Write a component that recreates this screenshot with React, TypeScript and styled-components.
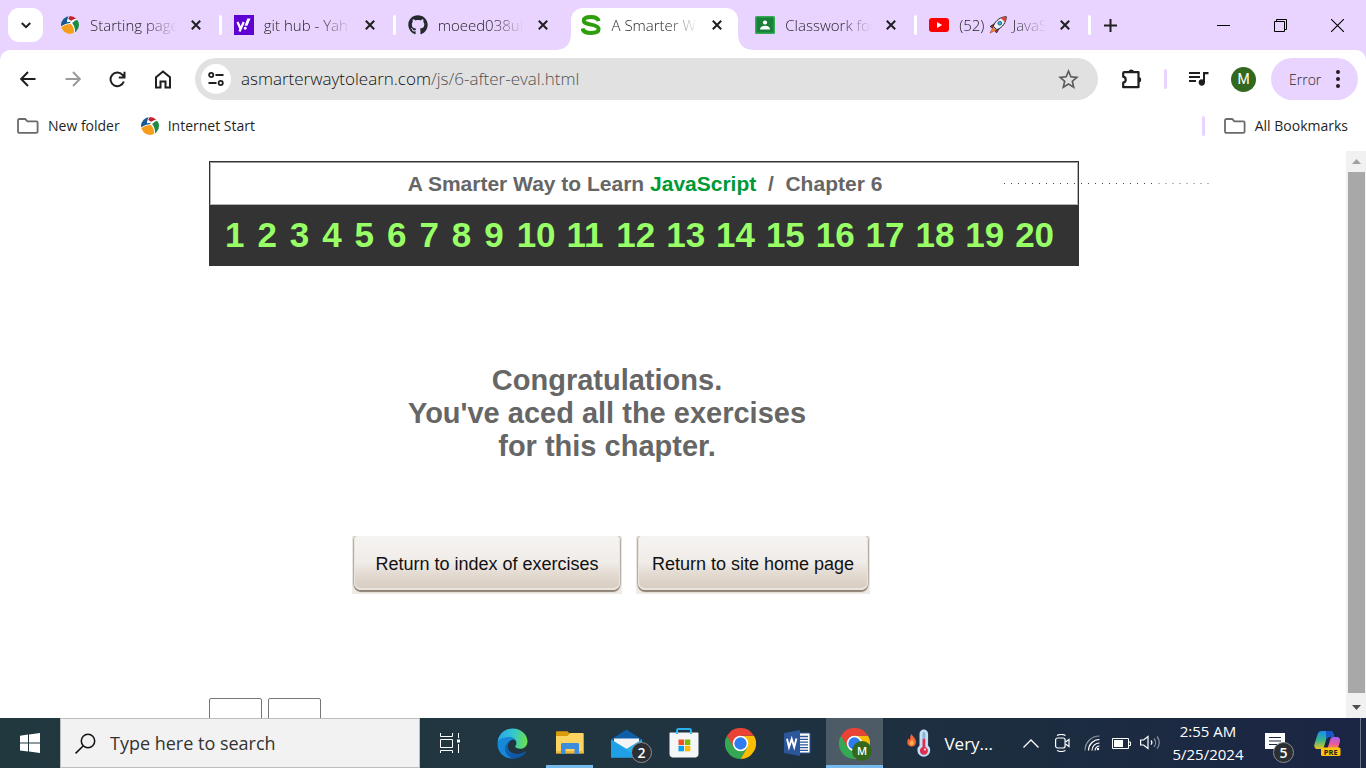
import React from "react";
import styled, { createGlobalStyle } from "styled-components";
import { FaGithub } from "react-icons/fa";
import { MdStarBorder } from "react-icons/md";

const ui = `"Open Sans", "Noto Sans", sans-serif`;
const helv = `"Liberation Sans", Arial, sans-serif`;
const lilac = "#e9d4ff";

const GlobalStyle = createGlobalStyle`
  *, *::before, *::after { box-sizing: border-box; }
  body { margin: 0; background: #fff; font-family: ${ui}; font-weight: 350; color: #1f1f1f; }
  button { font: inherit; color: inherit; border: 0; background: none; padding: 0; }
  a { color: inherit; text-decoration: none; }
  svg { display: block; flex: none; }
`;

const Screen = styled.div`
  display: flex;
  flex-direction: column;
  height: 100vh;
  overflow: hidden;
`;

/* ---------- tab strip ---------- */
const TabStrip = styled.header`
  display: flex;
  height: 50px;
  padding-left: 8px;
  background: ${lilac};
`;
const TabSearch = styled.button`
  display: grid;
  place-items: center;
  width: 35px;
  height: 34px;
  margin: 8px 4px 0 0;
  border-radius: 11px;
  background: #fff;
`;
const Tabs = styled.nav`
  display: flex;
  flex: 0 1 1043px;
  min-width: 0;
`;
const TabItem = styled.div<{ $active?: boolean; $divided?: boolean }>`
  position: relative;
  display: flex;
  flex: 1 1 0;
  min-width: 0;
  align-items: center;
  margin-top: 8px;
  padding: 0 20px 8px 13px;
  &::before {
    content: "";
    display: ${(p) => (p.$active ? "block" : "none")};
    position: absolute;
    inset: 0 4px 0 3px;
    border-radius: 12px 12px 0 0;
    background: #fff;
  }
  &::after {
    content: "";
    display: ${(p) => (p.$active || p.$divided ? "block" : "none")};
    position: absolute;
    ${(p) =>
      p.$active
        ? `inset: auto -9px 0 -10px; height: 13px;
           background: radial-gradient(circle at 0 0, transparent 12px, #fff 13px) left / 13px 13px no-repeat,
                       radial-gradient(circle at 100% 0, transparent 12px, #fff 13px) right / 13px 13px no-repeat;`
        : `top: 7px; right: -1px; width: 3px; height: 20px; border-radius: 2px; background: #fff;`}
  }
  > * { z-index: 1; }
`;
const IconSlot = styled.span`
  display: grid;
  flex: none;
  place-items: center;
  width: 20px;
  height: 20px;
`;
const TabTitle = styled.a`
  display: flex;
  flex: 1;
  min-width: 0;
  align-items: center;
  gap: 5px;
  margin: 0 14px 0 10px;
  overflow: hidden;
  white-space: nowrap;
  font-size: 15px;
  line-height: 24px;
  mask-image: linear-gradient(to right, #000 64%, transparent 100%);
`;
const CloseButton = styled.button`
  display: grid;
  place-items: center;
`;
const NewTab = styled.button`
  width: 41px;
  display: grid;
  place-items: center;
`;
const WindowControls = styled.div`
  display: flex;
  margin-left: auto;
  button { width: 57px; display: grid; place-items: center; }
`;

/* ---------- toolbar ---------- */
const ToolbarBack = styled.div`
  background: ${lilac};
`;
const Toolbar = styled.div`
  display: flex;
  align-items: center;
  height: 58px;
  padding: 0 8px 0 5px;
  border-radius: 10px 10px 0 0;
  background: #fff;
`;
const ToolButton = styled.button<{ $faded?: boolean; $w?: number }>`
  display: grid;
  place-items: center;
  width: ${(p) => p.$w ?? 45}px;
  height: 40px;
  color: ${(p) => (p.$faded ? "#9b9b9b" : "#1f1f1f")};
`;
const Omnibox = styled.div`
  display: flex;
  flex: 1;
  align-items: center;
  height: 42px;
  margin-left: 10px;
  padding: 0 17px 0 6px;
  border-radius: 21px;
  background: #e1e1e1;
  color: #5c5c5c;
`;
const SiteInfo = styled.button`
  display: grid;
  place-items: center;
  width: 30px;
  height: 30px;
  margin-right: 10px;
  border-radius: 50%;
  background: #fff;
  color: #1f1f1f;
`;
const Address = styled.div`
  flex: 1;
  color: #505050;
  font-size: 17px;
  line-height: 24px;
  white-space: nowrap;
  b { font-weight: 350; color: #111; }
`;
const Divider = styled.span`
  width: 3px;
  height: 20px;
  border-radius: 2px;
  background: ${lilac};
`;
const Avatar = styled.button`
  width: 25px;
  height: 25px;
  margin-right: 15px;
  border-radius: 50%;
  background: #33691e;
  color: #fff;
  font: 400 14px/25px Roboto, sans-serif;
`;
const ErrorPill = styled.button`
  display: flex;
  align-items: center;
  justify-content: space-between;
  width: 87px;
  height: 42px;
  padding: 0 18px;
  border-radius: 21px;
  background: ${lilac};
  font-size: 14px;
`;

const BookmarkBar = styled.nav`
  display: flex;
  align-items: center;
  height: 43px;
  padding: 0 18px 8px 17px;
  font-size: 14px;
  font-weight: 400;
  line-height: 18px;
`;
const Bookmark = styled.a`
  display: flex;
  align-items: center;
  gap: 9px;
  margin-right: 21px;
  &:last-child { margin: 0 0 0 19px; }
`;
const Spacer = styled.span`
  flex: 1;
`;

/* ---------- page ---------- */
const Viewport = styled.div`
  display: flex;
  flex: 1;
  min-height: 0;
`;
const Page = styled.main`
  flex: 1;
  min-width: 0;
  overflow: hidden;
  padding-top: 10px;
  font-family: ${helv};
  font-weight: 400;
`;
const Column = styled.div`
  max-width: 928px;
  margin: 0 auto;
`;
const Banner = styled.header`
  position: relative;
  max-width: 870px;
  border: 1px solid #333;
  background: #333;
`;
const BannerTitle = styled.div`
  height: 43px;
  padding-left: 2px;
  border: 1px solid #b4b4b4;
  border-top-color: #999;
  background: #fff;
  color: #666;
  font-size: 21px;
  font-weight: 700;
  line-height: 42px;
  text-align: center;
  white-space: pre;
  em { font-style: normal; color: #093; }
`;
const Chapters = styled.nav`
  display: grid;
  grid-template-columns: repeat(9, 13fr) repeat(11, 20fr);
  height: 60px;
  padding: 0 13px 0 15px;
  color: #9f6;
  font-size: 35px;
  font-weight: 700;
  line-height: 60px;
`;
const DotTrail = styled.svg`
  position: absolute;
  top: 20px;
  right: -134px;
`;
const Result = styled.section`
  max-width: 796px;
`;
const Message = styled.h1`
  margin: 98px 0 73px;
  color: #666;
  font-size: 29px;
  line-height: 33px;
  text-align: center;
`;
const Actions = styled.div`
  display: flex;
  justify-content: center;
  gap: 14px;
  padding-left: 8px;
`;
const Plate = styled.span`
  display: block;
  padding: 0 2px 4px;
  overflow: hidden;
  background: #efebe6;
`;
const SoftButton = styled.button<{ $w: number }>`
  display: block;
  width: ${(p) => p.$w}px;
  height: 54px;
  padding-top: 4px;
  border: solid #e9e4df;
  border-width: 0 1px 2px;
  border-radius: 4px 4px 7px 7px;
  background: linear-gradient(#f6f4f2, #f0ece8 50%, #e2d9cf 75%, #d8cdc1);
  box-shadow: 0 2px 1px #8d8174, 0 0 1px 1px #b7aea4;
  color: #111;
  font-size: 18px;
`;
const Scores = styled.div`
  display: flex;
  gap: 6px;
  margin-top: 104px;
`;
const ScoreBox = styled.input`
  width: 53px;
  height: 30px;
  border: 1px solid #767676;
  border-radius: 2px;
`;

const Scrollbar = styled.div`
  display: flex;
  flex-direction: column;
  width: 20px;
  background: #f1f1f1;
`;
const ScrollButton = styled.button`
  display: grid;
  place-items: center;
  height: 21px;
`;
const Thumb = styled.div`
  flex: 1;
  margin: 0 1px 4px 2px;
  background: #a8a8a8;
`;

/* ---------- taskbar ---------- */
const Taskbar = styled.footer`
  display: flex;
  align-items: stretch;
  height: 50px;
  background: linear-gradient(to right, #21383f, #203540 45%, #1c2d40 75%, #1b2544);
  color: #fff;
  font-weight: 400;
`;
const TaskButton = styled.button<{ $w?: number; $open?: boolean; $active?: boolean }>`
  position: relative;
  display: grid;
  place-items: center;
  width: ${(p) => p.$w ?? 57}px;
  background: ${(p) => (p.$active ? "#4c5b66" : "transparent")};
  &::after {
    content: "";
    display: ${(p) => (p.$open || p.$active ? "block" : "none")};
    position: absolute;
    inset: auto ${(p) => (p.$active ? 0 : 5)}px 0;
    height: 3px;
    background: #76b9ed;
  }
`;
const TaskSearch = styled.label`
  display: flex;
  align-items: center;
  gap: 14px;
  width: 360px;
  padding: 0 14px;
  border: 1px solid #bdbdbd;
  background: #f2f2f2;
  color: #1f1f1f;
`;
const SearchInput = styled.input`
  flex: 1;
  min-width: 0;
  padding: 0;
  border: 0;
  background: none;
  font: 18px/26px ${ui};
  &::placeholder { color: #333; opacity: 1; }
`;
const Apps = styled.div`
  display: flex;
  margin-left: 4px;
`;
const Badge = styled.span<{ $right?: number }>`
  position: absolute;
  right: ${(p) => p.$right ?? 3}px;
  bottom: 5px;
  width: 21px;
  height: 21px;
  border: 1px solid #8d8d8d;
  border-radius: 50%;
  background: #2b2f33;
  color: #fff;
  font-size: 14px;
  font-weight: 600;
  line-height: 19px;
  text-align: center;
`;
const ProfileBadge = styled(Badge)`
  bottom: 7px;
  width: 20px;
  height: 20px;
  border: 0;
  background: #33691e;
  font-size: 11px;
`;
const Tray = styled.div`
  display: flex;
  margin-left: auto;
`;
const Weather = styled.button`
  display: flex;
  align-items: center;
  gap: 13px;
  margin-right: 20px;
  font-size: 17px;
`;
const Clock = styled.button`
  width: 86px;
  margin-right: 4px;
  font-size: 15px;
  line-height: 23px;
  time { display: block; }
`;
const ShowDesktop = styled.button`
  width: 6px;
  border-left: 1px solid #6b7585;
`;

/* ---------- drawings ---------- */
const Cross = () => (
  <svg width="10" height="10" viewBox="0 0 10 10" stroke="#1f1f1f" strokeWidth="2">
    <path d="M.8.8l8.4 8.4M9.2.8L.8 9.2" />
  </svg>
);
const Ball = () => (
  <svg width="18" height="18" viewBox="0 0 18 18">
    <defs><clipPath id="ballClip"><circle cx="9" cy="9" r="9" /></clipPath></defs>
    <g clipPath="url(#ballClip)">
      <path d="M0 0h18v18H0z" fill="#fff" />
      <path d="M0 0h7.800C6.500 2.200 6 4.200 6 6.200L10 5.800 8.500 7.200C5.500 7.400 2.500 8.500 0 10.500z" fill="#155a94" />
      <path d="M8.800 0H16v2.600c-2.200.3-4 1-5.800 2.200L7.200 3C7.500 2 8 1 8.800 0z" fill="#c2212e" />
      <path d="M18 3.200V18h-4.300c1-4-.1-7.800-2.500-11C13 5 15.300 3.800 18 3.200z" fill="#1f8a45" />
      <path d="M0 11.500C2.800 8.800 6.300 7.700 10 7.900c2.700 3 3.600 6.300 2.800 10.100H0z" fill="#f79d1e" />
    </g>
  </svg>
);
const Yahoo = () => (
  <svg width="20" height="20" viewBox="0 0 20 20">
    <path d="M0 0h20v20H0z" fill="#5f01d1" />
    <path d="M3.500 7l3 6.800M9.700 7l-4.200 9.500" stroke="#fff" strokeWidth="2.300" fill="none" />
    <path d="M13.300 3.500h3.200l-3 7.300h-3zM11.200 11.800a1.500 1.500 0 1 0 .1 0z" fill="#fff" />
  </svg>
);
const SmarterS = () => (
  <svg width="20" height="20" viewBox="0 0 20 20">
    <path d="M17.600 6.200C17 3.300 14 2.100 10 2.100c-4.200 0-7.200 1.200-7.200 3.500 0 2.600 3 3.200 7.200 4 4.400.8 7.600 1.700 7.600 4.400 0 2.500-3.200 3.900-7.600 3.900-5 0-8-1.400-8.500-4.500" fill="none" stroke="#2f9e0c" strokeWidth="4" />
  </svg>
);
const Classroom = () => (
  <svg width="20" height="18" viewBox="0 0 20 18">
    <rect width="20" height="18" rx="1.500" fill="#34a853" />
    <path d="M1.500 1.500h17v15h-17z" fill="#188038" />
    <circle cx="10" cy="6.500" r="2.100" fill="#fff" />
    <path d="M5 13.500c0-2.600 2.400-3.800 5-3.800s5 1.200 5 3.800z" fill="#fff" />
  </svg>
);
const YouTube = () => (
  <svg width="20" height="14" viewBox="0 0 20 14">
    <rect width="20" height="14" rx="3" fill="#f00" />
    <path d="M8 4l5.200 3L8 10z" fill="#fff" />
  </svg>
);
const Rocket = () => (
  <svg width="18" height="18" viewBox="0 0 18 18">
    <path d="M5 8L1 10.500 3.500 12zM10 13l-2.500 4L6 14.500z" fill="#c33" stroke="#222" strokeWidth=".8" />
    <path d="M4 11.500l2.800 2.800L1 17z" fill="#f78d1e" stroke="#a33" strokeWidth=".6" />
    <path d="M17.300.7C12 .8 6.500 4 4.300 10.200l3.500 3.500C14 11.500 17.200 6 17.300.7z" fill="#eaf3f8" stroke="#222" />
    <path d="M17.300.7c-2 0-4 .5-5.600 1.300l4.300 4.300c.8-1.700 1.300-3.600 1.300-5.600z" fill="#d6453d" />
    <circle cx="10.800" cy="7.200" r="1.900" fill="#35b5e9" stroke="#234" strokeWidth=".7" />
  </svg>
);
const Folder = () => (
  <svg width="22" height="16" viewBox="0 0 22 16" fill="none" stroke="#6a6a6a" strokeWidth="1.800">
    <path d="M2.500 1h5.700l2.300 2.300h8.700c.8 0 1.400.5 1.400 1.200v9c0 .8-.6 1.400-1.400 1.400H2.500c-.8 0-1.500-.6-1.500-1.400V2.400C1 1.600 1.700 1 2.500 1z" />
  </svg>
);
const Playlist = () => (
  <svg width="20" height="17" viewBox="0 0 20 17">
    <path d="M0 2h11M0 6h11M0 10h7" stroke="currentColor" strokeWidth="2" />
    <path d="M14 1h5.500v2.300H16v8.200a3.200 3.200 0 1 1-2-3z" fill="currentColor" />
  </svg>
);
const Chrome = () => (
  <svg width="31" height="31" viewBox="0 0 48 48">
    <path d="M24 24L3.200 12A24 24 0 0 0 24 48l10.400-18z" fill="#34a853" />
    <path d="M24 12h20.800A24 24 0 0 1 24 48l10.400-18z" fill="#fbbc04" />
    <path d="M24 12h20.800A24 24 0 0 0 3.200 12l10.400 18z" fill="#ea4335" />
    <circle cx="24" cy="24" r="12" fill="#fff" />
    <circle cx="24" cy="24" r="9.500" fill="#2f7cf0" />
  </svg>
);
const Edge = () => (
  <svg width="31" height="31" viewBox="0 0 31 31">
    <defs>
      <linearGradient id="eTop" x1="0" y1=".4" x2="1" y2=".5">
        <stop offset="0" stopColor="#27a5ea" /><stop offset=".5" stopColor="#33c6cf" /><stop offset="1" stopColor="#6be04d" />
      </linearGradient>
      <linearGradient id="eLow" x1="0" y1="0" x2="1" y2="1">
        <stop offset="0" stopColor="#1468b8" /><stop offset="1" stopColor="#0d4f9f" />
      </linearGradient>
    </defs>
    <path d="M.6 14C1.400 6 7.600.5 15.500.5 24 .5 30.500 6.500 30.500 13.500c0 4.500-3.300 7.300-7.300 7.300-3 0-5-1-5-2.200 0-.8 1.200-1.400 1.200-3.600 0-3-2.900-5.600-7-5.600C6.500 9.400 2 12.500.6 14z" fill="url(#eTop)" />
    <path d="M.6 14.500C2 11.300 6.500 9 12 9c2.800 0 5 1 6.300 2.500-4.300-.5-8.300 2.500-8.300 7.500 0 6 5 9.800 10.500 10.300C11 33.500-.5 26.500.6 14.500z" fill="#1788d8" />
    <path d="M12.500 13.500c-3 4-2 9 2.500 11.300 4 2 9.300 1.300 13.200-1.300.7-.4 1.200.2.800.8C25.500 29 20 31.500 15.500 30.300 9.500 28.500 7 23.500 8.300 18.600c.7-2.700 2.200-4.400 4.200-5.100z" fill="url(#eLow)" />
  </svg>
);
const Explorer = () => (
  <svg width="28" height="24" viewBox="0 0 28 24">
    <path d="M0 1.500C0 .7.500.300 1.200.300h10.300L14 3v4H0z" fill="#d99a0b" />
    <path d="M0 5h11.500L14 2h12.500c.8 0 1.200.5 1.200 1.200v19H0z" fill="#fcd462" />
    <path d="M0 20h27.700v2.500H0z" fill="#efb93a" />
    <path d="M5 23V13.500c0-1 .6-1.500 1.500-1.500h15c1 0 1.500.5 1.500 1.500V23h-4.500v-5h-9v5z" fill="#3c8ddb" />
  </svg>
);
const Mail = () => (
  <svg width="31" height="29" viewBox="0 0 31 29">
    <path d="M0 10.500L15.500.5 31 10.500v4H0z" fill="#0f5ea8" />
    <path d="M3 9.500h25v8L15.500 22 3 17.500z" fill="#f4f4f6" />
    <path d="M0 10.500l15.500 9.300L31 10.500V28.500H0z" fill="#28b2ee" />
    <path d="M0 10.500l27 18H0z" fill="#1f9fe6" />
  </svg>
);
const Store = () => (
  <svg width="30" height="30" viewBox="0 0 30 30">
    <path d="M8 5V2.600C8 1.600 8.600 1 9.500 1h11c1 0 1.500.6 1.500 1.600V5" fill="none" stroke="#2bb0f0" strokeWidth="2" />
    <path d="M1.500 4.500h27c.6 0 1 .4 1 1V26c0 2-1.400 3.500-3.500 3.500H4C2 29.500.5 28 .5 26V5.500c0-.6.4-1 1-1z" fill="#f5f6f7" />
    <path d="M9.500 11.500H15V17H9.500z" fill="#f25022" /><path d="M15.800 11.500h5.500V17h-5.500z" fill="#7fba00" />
    <path d="M9.500 17.800H15v5.500H9.500z" fill="#00a4ef" /><path d="M15.800 17.800h5.500v5.500h-5.500z" fill="#ffb900" />
    <path d="M8 4.500v1.600M22 4.500v1.600" stroke="#2bb0f0" strokeWidth="2" />
  </svg>
);
const Word = () => (
  <svg width="27" height="26" viewBox="0 0 27 26">
    <path d="M14 3h12v20H14z" fill="#fff" stroke="#2b579a" strokeWidth="1" />
    <path d="M16 6.500h8M16 9.300h8M16 12.100h8M16 14.900h8M16 17.700h8M16 20.300h8" stroke="#2b579a" strokeWidth="1.300" />
    <path d="M0 3L16 0v26L0 23z" fill="#2b579a" />
    <path d="M3 8.800l2 8.400L7.700 9l2.500 8.200 2.200-8.600" fill="none" stroke="#fff" strokeWidth="1.900" />
  </svg>
);
const Thermo = () => (
  <svg width="24" height="28" viewBox="0 0 24 28">
    <path d="M4.500 5c.5 2 4.500 4 4.500 8a4.300 4.300 0 0 1-8.700.5c-.2-2 .7-3.500 1.500-4.300.3 1 .7 1.500 1.300 1.800C3 8.500 3.300 6.500 4.500 5z" fill="#f2673a" />
    <path d="M4.800 10.500c1.300 1 2 2.400 1.800 3.800a2 2 0 0 1-4 .2c0-1.800 1.800-2 2.200-4z" fill="#fcb045" />
    <path d="M12.500 4.800a4.300 4.300 0 0 1 8.600 0v11.700a6.400 6.400 0 1 1-8.600 0z" fill="#bfe0f7" />
    <path d="M15.500 9.500h2.800v8.500a4 4 0 1 1-2.800 0z" fill="#df2f4e" />
    <path d="M15.500 4.500a1.400 1.400 0 0 1 2.800 0v5h-2.800z" fill="#8fb3cf" />
    <circle cx="18" cy="20.500" r="1" fill="#fff" />
  </svg>
);
const Copilot = () => (
  <svg width="27" height="27" viewBox="0 0 27 27">
    <defs>
      <linearGradient id="cpL" x1="0" y1="0" x2="0" y2="1">
        <stop offset="0" stopColor="#1c8df0" /><stop offset=".5" stopColor="#34b58d" /><stop offset="1" stopColor="#efc21b" />
      </linearGradient>
      <linearGradient id="cpR" x1="0" y1="0" x2="0" y2="1">
        <stop offset="0" stopColor="#a75df2" /><stop offset=".6" stopColor="#ee5b97" /><stop offset="1" stopColor="#f9973f" />
      </linearGradient>
    </defs>
    <path d="M8 1h8c2 0 3 1 3.500 3l.8 3h-5c-2 0-2.800 1-3.300 3l-1.700 6C9.800 18 9 19 7 19H4c-3 0-4.300-2-3.500-5L3.500 4.500C4.200 2 5.600 1 8 1z" fill="url(#cpL)" />
    <path d="M12 1h4c2 0 3 1 3.500 3l.8 3h-5c-2 0-2.600.6-3.200 2z" fill="#1556c8" />
    <path d="M19.500 7h3c3 0 4 2 3.300 5l-2 7h-13c2 0 3-1 3.500-3l2-6.500C16.800 7.700 17.500 7 19.500 7z" fill="url(#cpR)" />
    <rect x="7" y="17.500" width="19.500" height="8.500" rx="1.500" fill="#fcc40c" />
    <text x="16.700" y="24.500" textAnchor="middle" fontSize="7.500" fontWeight="700" fontFamily="Open Sans, sans-serif" fill="#222">PRE</text>
  </svg>
);

const tabs: { icon: React.ReactNode; title: React.ReactNode; active?: boolean; divided?: boolean }[] = [
  { icon: <Ball />, title: "Starting page", divided: true },
  { icon: <Yahoo />, title: "git hub - Yah", divided: true },
  { icon: <FaGithub size={20} color="#24292f" />, title: "moeed038ula" },
  { icon: <SmarterS />, title: "A Smarter Wa", active: true },
  { icon: <Classroom />, title: "Classwork for", divided: true },
  { icon: <YouTube />, title: <>(52) <Rocket /> JavaS</>, divided: true },
];
const chapters = Array.from({ length: 20 }, (_, i) => i + 1);

export default function App() {
  return (
    <Screen>
      <GlobalStyle />
      <TabStrip>
        <TabSearch aria-label="Search tabs">
          <svg width="10" height="7" viewBox="0 0 10 7" fill="none" stroke="#1f1f1f" strokeWidth="2"><path d="M.8 1L5 5.200 9.200 1" /></svg>
        </TabSearch>
        <Tabs>
          {tabs.map((t, i) => (
            <TabItem key={i} $active={t.active} $divided={t.divided}>
              <IconSlot>{t.icon}</IconSlot>
              <TabTitle href="#">{t.title}</TabTitle>
              <CloseButton aria-label="Close tab"><Cross /></CloseButton>
            </TabItem>
          ))}
        </Tabs>
        <NewTab aria-label="New tab">
          <svg width="13" height="13" viewBox="0 0 13 13" stroke="#1f1f1f" strokeWidth="2"><path d="M6.500 0v13M0 6.500h13" /></svg>
        </NewTab>
        <WindowControls>
          <button aria-label="Minimize"><svg width="13" height="13" stroke="#000"><path d="M0 6.500h13" /></svg></button>
          <button aria-label="Restore">
            <svg width="13" height="13" fill="none" stroke="#000"><path d="M.5 2.500h10v10H.5zM2.500 2V.5h10v10H11" /></svg>
          </button>
          <button aria-label="Close window"><svg width="13" height="13" stroke="#000" strokeWidth="1.100"><path d="M0 0l13 13M13 0L0 13" /></svg></button>
        </WindowControls>
      </TabStrip>

      <ToolbarBack>
        <Toolbar>
          <ToolButton aria-label="Back">
            <svg width="16" height="16" viewBox="0 0 16 16" fill="none" stroke="currentColor" strokeWidth="2"><path d="M15.500 8H1.500M8 1L1.200 8 8 15" /></svg>
          </ToolButton>
          <ToolButton aria-label="Forward" $faded>
            <svg width="16" height="16" viewBox="0 0 16 16" fill="none" stroke="currentColor" strokeWidth="2"><path d="M.5 8h14M8 1l6.800 7L8 15" /></svg>
          </ToolButton>
          <ToolButton aria-label="Reload">
            <svg width="17" height="17" viewBox="0 0 17 17" fill="none" stroke="currentColor" strokeWidth="2"><path d="M14.800 10.500a6.800 6.800 0 1 1-1.300-6.600l1.500 1.700M15.500.8v5.700H9.800" /></svg>
          </ToolButton>
          <ToolButton aria-label="Home">
            <svg width="18" height="19" viewBox="0 0 18 19" fill="none" stroke="currentColor" strokeWidth="2"><path d="M2 7.200L9 1.500l7 5.700V17.500h-4.500v-6h-5v6H2z" /></svg>
          </ToolButton>
          <Omnibox>
            <SiteInfo aria-label="Site information">
              <svg width="16" height="14" viewBox="0 0 16 14" fill="none" stroke="currentColor" strokeWidth="1.800">
                <circle cx="3.200" cy="3" r="2.100" /><path d="M7.500 3H15.500M.5 11h8" /><circle cx="12.700" cy="11" r="2.100" />
              </svg>
            </SiteInfo>
            <Address><b>asmarterwaytolearn.com</b>/js/6-after-eval.html</Address>
            <MdStarBorder size={25} />
          </Omnibox>
          <ToolButton aria-label="Extensions" $w={66}>
            <svg width="22" height="21" viewBox="0 0 22 21" fill="none" stroke="currentColor" strokeWidth="2.200">
              <path d="M4.200 3.200h14.300v15H3.200v-4.500c1.500-.3 2.500-1.500 2.500-3s-1-2.700-2.500-3V4.200c0-.6.400-1 1-1z" strokeLinejoin="round" />
              <path d="M8.500 3.200a2.700 2.700 0 0 1 5.400 0zM18.500 8a2.700 2.700 0 0 1 0 5.400z" fill="currentColor" stroke="none" />
            </svg>
          </ToolButton>
          <Divider />
          <ToolButton aria-label="Media controls" $w={64}><Playlist /></ToolButton>
          <Avatar>M</Avatar>
          <ErrorPill>
            Error
            <svg width="4" height="18" viewBox="0 0 4 18" fill="#1f1f1f"><circle cx="2" cy="2" r="2" /><circle cx="2" cy="9" r="2" /><circle cx="2" cy="16" r="2" /></svg>
          </ErrorPill>
        </Toolbar>
      </ToolbarBack>

      <BookmarkBar>
        <Bookmark href="#"><Folder />New folder</Bookmark>
        <Bookmark href="#"><Ball />Internet Start</Bookmark>
        <Spacer />
        <Divider />
        <Bookmark href="#"><Folder />All Bookmarks</Bookmark>
      </BookmarkBar>

      <Viewport>
        <Page>
          <Column>
            <Banner>
              <BannerTitle>A Smarter Way to Learn <em>JavaScript</em>{"  /  "}Chapter 6</BannerTitle>
              <Chapters>{chapters.map((n) => <a key={n} href="#">{n}</a>)}</Chapters>
              <DotTrail width="208" height="2">
                <path d="M0 1.500h148" stroke="#444" strokeDasharray="1 6" />
                <path d="M154 1.500h54" stroke="#b5b5b5" strokeDasharray="2 5" />
              </DotTrail>
            </Banner>
            <Result>
              <Message>Congratulations.<br />You've aced all the exercises<br />for this chapter.</Message>
              <Actions>
                <Plate><SoftButton $w={266}>Return to index of exercises</SoftButton></Plate>
                <Plate><SoftButton $w={230}>Return to site home page</SoftButton></Plate>
              </Actions>
            </Result>
            <Scores>
              <ScoreBox aria-label="Correct" />
              <ScoreBox aria-label="Total" />
            </Scores>
          </Column>
        </Page>
        <Scrollbar>
          <ScrollButton aria-label="Scroll up"><svg width="9" height="5"><path d="M4.500 0L9 5H0z" fill="#a0a0a0" /></svg></ScrollButton>
          <Thumb />
          <ScrollButton aria-label="Scroll down"><svg width="9" height="5"><path d="M0 0h9L4.500 5z" fill="#505050" /></svg></ScrollButton>
        </Scrollbar>
      </Viewport>

      <Taskbar>
        <TaskButton aria-label="Start" $w={60}>
          <svg width="20" height="20" viewBox="0 0 20 20" fill="#fff"><path d="M0 2.700l8-1.100v8H0zM9 1.400L20 0v9.600H9zM0 10.500h8v8l-8-1.100zM9 10.500h11V20L9 18.600z" /></svg>
        </TaskButton>
        <TaskSearch>
          <svg width="21" height="21" viewBox="0 0 21 21" fill="none" stroke="#111" strokeWidth="1.500"><circle cx="13" cy="8" r="6.700" /><path d="M8.300 12.700L.6 20.400" /></svg>
          <SearchInput placeholder="Type here to search" />
        </TaskSearch>
        <TaskButton aria-label="Task view" $w={60}>
          <svg width="20" height="20" viewBox="0 0 20 20" fill="none" stroke="#fff">
            <path d="M.5 0v3.500h12V0M.5 6.500h12v8H.5zM.5 20v-2.500h12V20M18.500 0v5M18.500 11v9" /><path d="M17 6.500h3v3h-3z" fill="#fff" stroke="none" />
          </svg>
        </TaskButton>
        <Apps>
          <TaskButton aria-label="Edge"><Edge /></TaskButton>
          <TaskButton aria-label="File Explorer" $open><Explorer /></TaskButton>
          <TaskButton aria-label="Mail"><Mail /><Badge>2</Badge></TaskButton>
          <TaskButton aria-label="Store"><Store /></TaskButton>
          <TaskButton aria-label="Chrome"><Chrome /></TaskButton>
          <TaskButton aria-label="Word"><Word /></TaskButton>
          <TaskButton aria-label="Chrome, signed in" $active><Chrome /><ProfileBadge $right={11}>M</ProfileBadge></TaskButton>
        </Apps>
        <Tray>
          <Weather><Thermo />Very...</Weather>
          <TaskButton aria-label="Hidden icons" $w={35}>
            <svg width="16" height="9" fill="none" stroke="#fff" strokeWidth="1.300"><path d="M.5 8.500L8 1l7.500 7.500" /></svg>
          </TaskButton>
          <TaskButton aria-label="Camera" $w={29}>
            <svg width="15" height="18" fill="none" stroke="#fff" strokeWidth="1.200"><rect x=".6" y="4" width="9.500" height="10" rx="2" /><path d="M10.500 8l3.500-2.500v7L10.500 10M2 1.500C4.500.300 8 .300 10.500 1.500M2 16.500c2.500 1.200 6 1.200 8.500 0" /></svg>
          </TaskButton>
          <TaskButton aria-label="Network" $w={30}>
            <svg width="16" height="16" fill="none" stroke="#fff" strokeWidth="1.200">
              <path d="M1 15.500A14.500 14.500 0 0 1 15.500 1" opacity=".5" /><path d="M4.500 15.500a11 11 0 0 1 11-11M8 15.500A7.500 7.500 0 0 1 15.500 8" /><path d="M11 15.500a4.500 4.500 0 0 1 4.500-4.500" /><circle cx="14" cy="14" r="1.200" fill="#fff" stroke="none" />
            </svg>
          </TaskButton>
          <TaskButton aria-label="Battery" $w={29}>
            <svg width="19" height="11"><path d="M.5.5h16v10H.5zM17 4h1.500v3.500H17" fill="none" stroke="#fff" /><path d="M2 2h9v7H2z" fill="#fff" /></svg>
          </TaskButton>
          <TaskButton aria-label="Volume" $w={29}>
            <svg width="21" height="16" fill="none" stroke="#fff" strokeWidth="1.200"><path d="M.6 5h3L8 1.500v12L3.600 10h-3z" /><path d="M11 5.500c1 1.200 1 3 0 4.200" /><path d="M14 3.500c2 2.400 2 6 0 8.300M17 1.500c3 3.600 3 8.600 0 12.200" opacity=".5" /></svg>
          </TaskButton>
          <Clock><time>2:55 AM</time><time>5/25/2024</time></Clock>
          <TaskButton aria-label="Notifications" $w={40}>
            <svg width="20" height="20"><path d="M0 0h20v16h-7l-4 4v-4H0z" fill="#fff" /><path d="M4 4.500h12M4 8h12M4 11.500h8" stroke="#1c2940" strokeWidth="1.200" /></svg>
            <Badge $right={1}>5</Badge>
          </TaskButton>
          <TaskButton aria-label="Copilot" $w={65}><Copilot /></TaskButton>
          <ShowDesktop aria-label="Show desktop" />
        </Tray>
      </Taskbar>
    </Screen>
  );
}
